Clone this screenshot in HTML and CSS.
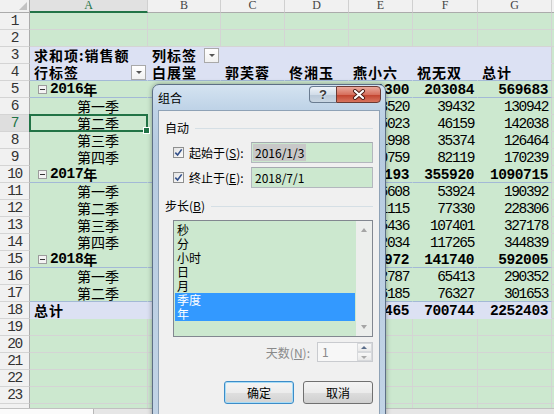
FILE: index.html
```html
<!DOCTYPE html>
<html lang="zh-CN">
<head>
<meta charset="utf-8">
<title>组合</title>
<link rel="stylesheet" href="styles.css">
</head>
<body>
<div class="sheet">
  <div class="corner"></div><div class="ch selc">A</div><div class="ch">B</div><div class="ch">C</div><div class="ch">D</div><div class="ch">E</div><div class="ch">F</div><div class="ch">G</div><div class="ch"></div>

  <div class="rh">1</div><div class="c"></div><div class="c"></div><div class="c"></div><div class="c"></div><div class="c"></div><div class="c"></div><div class="c"></div><div class="c"></div>
  <div class="rh">2</div><div class="c"></div><div class="c"></div><div class="c"></div><div class="c"></div><div class="c"></div><div class="c"></div><div class="c"></div><div class="c"></div>

  <div class="rh">3</div><div class="c p lv t">求和项:销售额</div><div class="c p lv t fx">列标签<span class="dd"></span></div><div class="c p lv"></div><div class="c p lv"></div><div class="c p lv"></div><div class="c p lv"></div><div class="c p lv g"></div><div class="c"></div>
  <div class="rh">4</div><div class="c p lv t fx bb">行标签<span class="dd"></span></div><div class="c p lv t bb">白展堂</div><div class="c p lv t bb">郭芙蓉</div><div class="c p lv t bb">佟湘玉</div><div class="c p lv t bb">燕小六</div><div class="c p lv t bb">祝无双</div><div class="c p lv t g bb">总计</div><div class="c"></div>

  <div class="rh">5</div><div class="c p t bb yr"><span class="tg"></span><span class="m">2016</span>年</div><div class="c p bb"></div><div class="c p bb"></div><div class="c p bb"></div><div class="c p n b bb">101300</div><div class="c p n b bb">203084</div><div class="c p n b g bb">569683</div><div class="c"></div>
  <div class="rh">6</div><div class="c p q">第一季</div><div class="c p"></div><div class="c p"></div><div class="c p"></div><div class="c p n">23520</div><div class="c p n">39432</div><div class="c p n g">130942</div><div class="c"></div>
  <div class="rh selr">7</div><div class="c p q active">第二季</div><div class="c p"></div><div class="c p"></div><div class="c p"></div><div class="c p n">25023</div><div class="c p n">46159</div><div class="c p n g">142038</div><div class="c"></div>
  <div class="rh">8</div><div class="c p q">第三季</div><div class="c p"></div><div class="c p"></div><div class="c p"></div><div class="c p n">31998</div><div class="c p n">35374</div><div class="c p n g">126464</div><div class="c"></div>
  <div class="rh">9</div><div class="c p q">第四季</div><div class="c p"></div><div class="c p"></div><div class="c p"></div><div class="c p n">20759</div><div class="c p n">82119</div><div class="c p n g">170239</div><div class="c"></div>

  <div class="rh">10</div><div class="c p t bb yr"><span class="tg"></span><span class="m">2017</span>年</div><div class="c p bb"></div><div class="c p bb"></div><div class="c p bb"></div><div class="c p n b bb">145193</div><div class="c p n b bb">355920</div><div class="c p n b g bb">1090715</div><div class="c"></div>
  <div class="rh">11</div><div class="c p q">第一季</div><div class="c p"></div><div class="c p"></div><div class="c p"></div><div class="c p n">26608</div><div class="c p n">53924</div><div class="c p n g">190392</div><div class="c"></div>
  <div class="rh">12</div><div class="c p q">第二季</div><div class="c p"></div><div class="c p"></div><div class="c p"></div><div class="c p n">31115</div><div class="c p n">77330</div><div class="c p n g">228306</div><div class="c"></div>
  <div class="rh">13</div><div class="c p q">第三季</div><div class="c p"></div><div class="c p"></div><div class="c p"></div><div class="c p n">45436</div><div class="c p n">107401</div><div class="c p n g">327178</div><div class="c"></div>
  <div class="rh">14</div><div class="c p q">第四季</div><div class="c p"></div><div class="c p"></div><div class="c p"></div><div class="c p n">42034</div><div class="c p n">117265</div><div class="c p n g">344839</div><div class="c"></div>

  <div class="rh">15</div><div class="c p t bb yr"><span class="tg"></span><span class="m">2018</span>年</div><div class="c p bb"></div><div class="c p bb"></div><div class="c p bb"></div><div class="c p n b bb">88972</div><div class="c p n b bb">141740</div><div class="c p n b g bb">592005</div><div class="c"></div>
  <div class="rh">16</div><div class="c p q">第一季</div><div class="c p"></div><div class="c p"></div><div class="c p"></div><div class="c p n">42787</div><div class="c p n">65413</div><div class="c p n g">290352</div><div class="c"></div>
  <div class="rh">17</div><div class="c p q bb">第二季</div><div class="c p bb"></div><div class="c p bb"></div><div class="c p bb"></div><div class="c p n bb">46185</div><div class="c p n bb">76327</div><div class="c p n g bb">301653</div><div class="c"></div>

  <div class="rh">18</div><div class="c p lv t">总计</div><div class="c p lv"></div><div class="c p lv"></div><div class="c p lv"></div><div class="c p lv n b">335465</div><div class="c p lv n b">700744</div><div class="c p lv n b g">2252403</div><div class="c"></div>

  <div class="rh">19</div><div class="c"></div><div class="c"></div><div class="c"></div><div class="c"></div><div class="c"></div><div class="c"></div><div class="c"></div><div class="c"></div>
  <div class="rh">20</div><div class="c"></div><div class="c"></div><div class="c"></div><div class="c"></div><div class="c"></div><div class="c"></div><div class="c"></div><div class="c"></div>
  <div class="rh">21</div><div class="c"></div><div class="c"></div><div class="c"></div><div class="c"></div><div class="c"></div><div class="c"></div><div class="c"></div><div class="c"></div>
  <div class="rh">22</div><div class="c"></div><div class="c"></div><div class="c"></div><div class="c"></div><div class="c"></div><div class="c"></div><div class="c"></div><div class="c"></div>
  <div class="rh">23</div><div class="c"></div><div class="c"></div><div class="c"></div><div class="c"></div><div class="c"></div><div class="c"></div><div class="c"></div><div class="c"></div>
  <div class="rh last"></div><div class="c last"></div><div class="c last"></div><div class="c last"></div><div class="c last"></div><div class="c last"></div><div class="c last"></div><div class="c last"></div><div class="c last"></div>
</div>
<div class="sbar"><div class="tabs"></div><div class="rest"></div></div>

<div class="dlg">
  <div class="dlg-title">
    <span class="caption">组合</span>
    <div class="capbtns">
      <div class="cbtn help">?</div>
      <div class="cbtn close">
        <svg width="14" height="11" viewBox="0 0 14 11"><path d="M3 2 L11 9 M11 2 L3 9" stroke="#4a1a14" stroke-width="4" stroke-linecap="round"/><path d="M3 2 L11 9 M11 2 L3 9" stroke="#ffffff" stroke-width="2.2" stroke-linecap="round"/></svg>
      </div>
    </div>
  </div>
  <div class="dlg-body">
    <div class="grp">自动</div>
    <div class="frow">
      <span class="chk"><svg width="9" height="9" viewBox="0 0 9 9"><path d="M1.3 4.6 L3.6 7 L7.7 1.4" fill="none" stroke="#33508a" stroke-width="1.6"/></svg></span>
      <span class="lbl">起始于(<u>S</u>):</span>
      <div class="inp"><span class="val hl">2016/1/3</span></div>
    </div>
    <div class="frow r2">
      <span class="chk"><svg width="9" height="9" viewBox="0 0 9 9"><path d="M1.3 4.6 L3.6 7 L7.7 1.4" fill="none" stroke="#33508a" stroke-width="1.6"/></svg></span>
      <span class="lbl">终止于(<u>E</u>):</span>
      <div class="inp"><span class="val">2018/7/1</span></div>
    </div>
    <div class="grp g2">步长(<u>B</u>)</div>
    <div class="list">
      <div class="items">
        <div class="it">秒</div>
        <div class="it">分</div>
        <div class="it">小时</div>
        <div class="it">日</div>
        <div class="it">月</div>
        <div class="it on">季度</div>
        <div class="it on">年</div>
      </div>
      <div class="vscroll"><span class="up"></span><span class="down"></span></div>
    </div>
    <div class="nrow">
      <span class="nlbl">天数(<u>N</u>):</span>
      <div class="spin"><span class="sv">1</span><div class="sb"><span class="su"></span><span class="sd"></span></div></div>
    </div>
    <div class="brow">
      <div class="btn def">确定</div>
      <div class="btn">取消</div>
    </div>
  </div>
</div>
</body>
</html>
```
FILE: styles.css
```css
html, body {
  margin: 0;
  padding: 0;
}
body {
  width: 554px;
  height: 414px;
  overflow: hidden;
  position: relative;
  background: #ffffff;
  font-family: "Noto Sans CJK SC", "Liberation Sans", sans-serif;
}

/* ---------- spreadsheet grid ---------- */
.sheet {
  display: grid;
  grid-template-columns: 30px 118px 73px 64px 64px 64px 65px 74px 1fr;
  grid-template-rows: 13px repeat(23, 17px) 4px;
}
.corner {
  box-sizing: border-box;
  background: #f1f1f1;
  border-right: 1px solid #ababab;
  border-bottom: 1px solid #ababab;
  position: relative;
}
.corner::after {
  content: "";
  position: absolute;
  right: 2px;
  bottom: 2px;
  border-style: solid;
  border-width: 0 0 8px 8px;
  border-color: transparent transparent #c2c2c2 transparent;
}
.ch {
  box-sizing: border-box;
  background: #f1f1f1;
  border-right: 1px solid #d0d0d0;
  border-bottom: 1px solid #ababab;
  font-family: "Liberation Serif", serif;
  font-size: 12px;
  line-height: 10px;
  color: #444444;
  text-align: center;
  overflow: hidden;
}
.ch.selc {
  background: #e1e1e1;
  color: #217346;
  border-bottom: 2px solid #217346;
}
.rh {
  box-sizing: border-box;
  background: #f1f1f1;
  border-right: 1px solid #ababab;
  border-bottom: 1px solid #d4d4d4;
  font-family: "Liberation Mono", monospace;
  font-size: 14.5px;
  letter-spacing: -1.35px;
  line-height: 17px;
  color: #333333;
  text-align: center;
  overflow: hidden;
}
.rh.selr {
  background: #dedede;
  color: #217346;
}
.rh.last {
  border-bottom: 0;
}

.c {
  box-sizing: border-box;
  background: #cce8cf;
  border-right: 1px solid #d4d4d4;
  border-bottom: 1px solid #d4d4d4;
  padding: 0 4px;
  font-size: 14px;
  line-height: 16px;
  color: #000000;
  white-space: nowrap;
  overflow: hidden;
}
.c.last {
  border-bottom: 0;
}
.c.p {
  border-color: transparent;
}
.c.lv {
  background: #dce1f3;
}
.c.g {
  border-right-color: #d0d0d0;
}
.c.bb {
  border-bottom-color: #a3b9d6;
}
.c.t {
  font-weight: 700;
  letter-spacing: 1px;
}
.c.q {
  padding-left: 47px;
}
.c.n {
  font-family: "Liberation Mono", monospace;
  font-size: 14.5px;
  letter-spacing: -1.35px;
  line-height: 18px;
  text-align: right;
  padding-right: 3px;
}
.c.n.b {
  font-weight: 700;
  letter-spacing: -0.4px;
}
.c.fx {
  display: flex;
  align-items: center;
  padding-right: 1px;
}
.dd {
  margin-left: auto;
  width: 15px;
  height: 15px;
  box-sizing: border-box;
  border: 1px solid #a9a9a9;
  background: linear-gradient(#ffffff, #f1f1f1);
  position: relative;
}
.dd::after {
  content: "";
  position: absolute;
  left: 4px;
  top: 5px;
  border-style: solid;
  border-width: 3px 3px 0 3px;
  border-color: #555555 transparent transparent transparent;
}
.yr {
  display: flex;
  align-items: center;
}
.tg {
  width: 7px;
  height: 7px;
  border: 1px solid #9c9c9c;
  background: #f3f3f3;
  margin: 0 3px 0 4px;
  position: relative;
  flex: none;
}
.tg::after {
  content: "";
  position: absolute;
  left: 1px;
  top: 3px;
  width: 5px;
  height: 1px;
  background: #333333;
}
.m {
  font-family: "Liberation Mono", monospace;
  font-size: 14.5px;
  letter-spacing: -0.4px;
}
.c.active {
  position: relative;
  overflow: visible;
}
.c.active::after {
  content: "";
  position: absolute;
  left: -1px;
  top: -1px;
  right: -1px;
  bottom: -1px;
  border: 2px solid #217346;
  z-index: 1;
}
.c.active::before {
  content: "";
  position: absolute;
  right: -3px;
  bottom: -3px;
  width: 5px;
  height: 5px;
  background: #217346;
  border: 1px solid #ffffff;
  z-index: 2;
}

.sbar {
  display: flex;
  height: 6px;
  border-top: 1px solid #c0c0c0;
  background: #e6e6e6;
}
.sbar .tabs {
  width: 93px;
  background: #fbfbfb;
  border-right: 1px solid #b8b8b8;
}

/* ---------- dialog ---------- */
.dlg {
  position: absolute;
  left: 152px;
  top: 84px;
  width: 234px;
  height: 345px;
  box-sizing: border-box;
  border: 1px solid #5d6f85;
  border-radius: 7px 7px 0 0;
  background: linear-gradient(#d4e3f1, #bfd3e7 24px, #b7cbe0 60px, #c2d4e6);
  box-shadow: 0 0 5px rgba(0, 0, 0, 0.35);
  display: flex;
  flex-direction: column;
  font-size: 12px;
  color: #000000;
}
.dlg-title {
  height: 25px;
  display: flex;
  align-items: flex-start;
  flex: none;
}
.caption {
  margin: 5px 0 0 5px;
  line-height: 16px;
}
.capbtns {
  margin: 1px 4px 0 auto;
  display: flex;
}
.cbtn {
  height: 17px;
  box-sizing: border-box;
  display: flex;
  align-items: center;
  justify-content: center;
}
.cbtn.help {
  width: 27px;
  border: 1px solid #6a7c91;
  border-right: 0;
  border-radius: 4px 0 0 4px;
  background: linear-gradient(#eef3f8, #d2dde9 50%, #b9c8d8 51%, #c9d6e3);
  font-family: "Liberation Sans", sans-serif;
  font-weight: 700;
  font-size: 13px;
  color: #3b3b3b;
  text-shadow: 0 0 2px #ffffff;
}
.cbtn.close {
  width: 45px;
  border: 1px solid #6b3a34;
  border-radius: 0 4px 4px 0;
  background: linear-gradient(#e9a99c, #d7705e 50%, #c0412c 51%, #d8745f);
}
.dlg-body {
  flex: 1;
  margin: 0 5px;
  background: #f0f0f0;
  border: 1px solid #8fa2b6;
  padding: 9px 6px 0 6px;
  display: flex;
  flex-direction: column;
}
.grp {
  display: flex;
  align-items: center;
  height: 16px;
  line-height: 16px;
}
.grp::after {
  content: "";
  flex: 1;
  height: 1px;
  background: #d5dfe5;
  margin-left: 6px;
}
.grp.g2 {
  margin-top: 10px;
}
.frow {
  display: flex;
  align-items: center;
  height: 21px;
  margin: 6px 0 0 8px;
}
.frow.r2 {
  margin-top: 4px;
}
.chk {
  width: 11px;
  height: 11px;
  box-sizing: border-box;
  border: 1px solid #8e8f8f;
  background: linear-gradient(135deg, #e4e4e4, #fbfbfb);
  display: flex;
  align-items: center;
  justify-content: center;
  margin-right: 5px;
}
.lbl {
  line-height: 16px;
}
.inp {
  margin-left: auto;
  width: 122px;
  height: 21px;
  box-sizing: border-box;
  border: 1px solid #b3b7be;
  border-top-color: #a5a9b0;
  background: #cce8cf;
  padding: 1px 0 0 1px;
}
.val {
  display: inline-block;
  height: 17px;
  line-height: 17px;
  padding: 0 2px;
}
.val.hl {
  background: #c8c8c8;
}
.list {
  margin: 6px 0 0 8px;
  width: 200px;
  height: 117px;
  box-sizing: border-box;
  border: 1px solid #828790;
  background: #cce8cf;
  display: flex;
}
.items {
  flex: 1;
  padding: 2px 1px 0 1px;
}
.it {
  height: 14px;
  line-height: 14px;
  padding-left: 2px;
}
.it.on {
  background: #3399ff;
  color: #ffffff;
}
.vscroll {
  width: 16px;
  background: #eceeec;
  display: flex;
  flex-direction: column;
  justify-content: space-between;
  align-items: center;
  padding: 7px 0;
}
.up, .down {
  width: 0;
  height: 0;
  border-style: solid;
}
.up {
  border-width: 0 3.5px 4px 3.5px;
  border-color: transparent transparent #a5a5a5 transparent;
}
.down {
  border-width: 4px 3.5px 0 3.5px;
  border-color: #a5a5a5 transparent transparent transparent;
}
.nrow {
  display: flex;
  justify-content: flex-end;
  align-items: center;
  height: 20px;
  margin-top: 5px;
}
.nlbl {
  color: #8a8a8a;
  margin-right: 7px;
}
.spin {
  width: 56px;
  height: 20px;
  box-sizing: border-box;
  border: 1px solid #c9cbcf;
  background: #f7f7f7;
  display: flex;
}
.sv {
  flex: 1;
  color: #8a8a8a;
  padding-left: 4px;
  line-height: 18px;
}
.sb {
  width: 15px;
  display: flex;
  flex-direction: column;
}
.su, .sd {
  flex: 1;
  border: 1px solid #d7d9dc;
  background: linear-gradient(#f8f8f8, #e9e9e9);
  position: relative;
}
.su::after, .sd::after {
  content: "";
  position: absolute;
  left: 3px;
  border-style: solid;
}
.su::after {
  top: 2px;
  border-width: 0 3px 3px 3px;
  border-color: transparent transparent #5a6d8a transparent;
}
.sd::after {
  top: 3px;
  border-width: 3px 3px 0 3px;
  border-color: #a9a9a9 transparent transparent transparent;
}
.brow {
  display: flex;
  justify-content: flex-end;
  gap: 9px;
  margin-top: 19px;
}
.btn {
  width: 70px;
  height: 23px;
  box-sizing: border-box;
  border: 1px solid #707070;
  border-radius: 3px;
  background: linear-gradient(#f3f3f3, #ebebeb 50%, #dddddd 51%, #cfcfcf);
  display: flex;
  align-items: center;
  justify-content: center;
  line-height: 16px;
}
.btn.def {
  border-color: #3c8cc8;
  box-shadow: inset 0 0 0 1px #a8dcf6;
  background: linear-gradient(#f4f4f4, #ececec 50%, #dfdfdf 51%, #d3d3d3);
}
```
